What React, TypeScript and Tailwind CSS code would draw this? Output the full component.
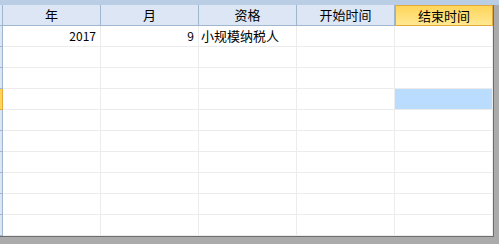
const columns = ["年", "月", "资格", "开始时间", "结束时间"];

type Row = { year?: string; month?: string; kind?: string };

const rows: Row[] = [
  { year: "2017", month: "9", kind: "小规模纳税人" },
  {},
  {},
  {},
  {},
  {},
  {},
  {},
  {},
  {},
];

const activeCol = 4;
const activeRow = 3;

export default function App() {
  return (
    <div
      className="w-[499px] h-[244px] bg-[#ababab] overflow-hidden"
      style={{ fontFamily: '"Noto Sans CJK SC", "Liberation Sans", sans-serif' }}
    >
      <div className="h-[5px] bg-[#b9cde5]" />
      <div className="w-[494px] bg-white border-r border-b border-[#6d6d6d]">
        {/* header */}
        <div className="flex h-[21px]">
          <div className="w-[3px] bg-[#dce6f4] border-r border-b border-[#9eb6ce]" />
          {columns.map((c, i) =>
            i === activeCol ? (
              <div
                key={c}
                className="w-[98px] flex items-center justify-center text-[13px] text-black bg-gradient-to-b from-[#ffd558] to-[#ffe891] border border-[#e4a93a]"
              >
                {c}
              </div>
            ) : (
              <div
                key={c}
                className="w-[98px] flex items-center justify-center text-[13px] text-black bg-[#dce6f4] border-r border-b border-[#9eb6ce]"
              >
                {c}
              </div>
            )
          )}
        </div>
        {/* body */}
        {rows.map((r, ri) => (
          <div key={ri} className="flex h-[21px]">
            <div
              className={
                ri === activeRow
                  ? "w-[3px] bg-[#ffd558] border-r border-b border-[#e4a93a]"
                  : "w-[3px] bg-[#dce6f4] border-r border-b border-[#9eb6ce]"
              }
            />
            <div className="w-[98px] border-r border-b border-[#ececec] text-right pr-[4px] text-[12px] leading-[20px] text-black">
              {r.year}
            </div>
            <div className="w-[98px] border-r border-b border-[#ececec] text-right pr-[4px] text-[12px] leading-[20px] text-black">
              {r.month}
            </div>
            <div className="w-[98px] border-r border-b border-[#ececec] pl-[2px] text-[13px] leading-[20px] text-black whitespace-nowrap">
              {r.kind}
            </div>
            <div className="w-[98px] border-r border-b border-[#ececec]" />
            <div
              className={
                ri === activeRow
                  ? "w-[98px] border-r border-b border-[#ececec] bg-[#b9dcff]"
                  : "w-[98px] border-r border-b border-[#ececec]"
              }
            />
          </div>
        ))}
      </div>
    </div>
  );
}
